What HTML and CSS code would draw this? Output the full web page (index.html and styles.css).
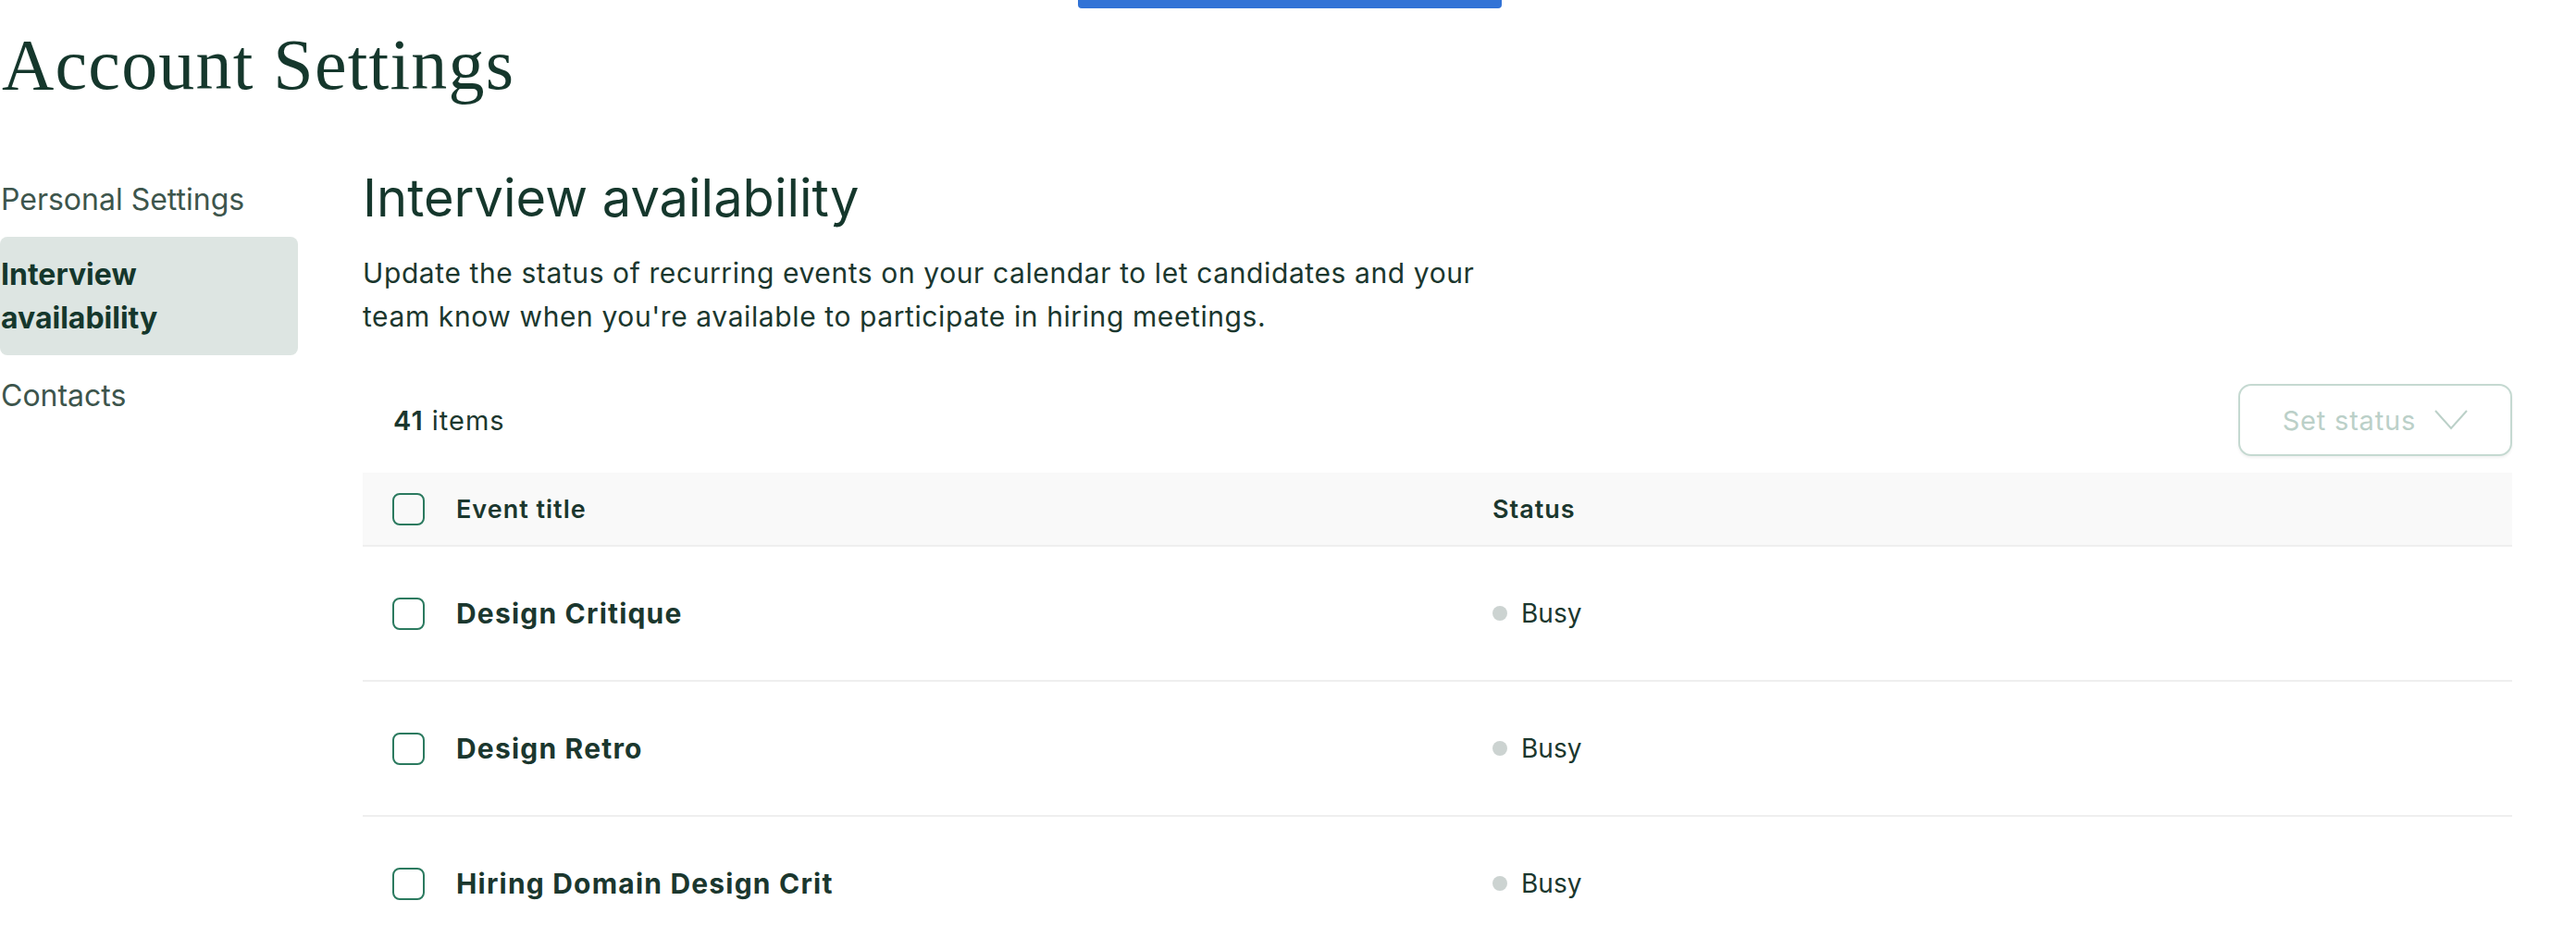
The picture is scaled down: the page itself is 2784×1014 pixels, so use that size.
FILE: index.html
```html
<!DOCTYPE html>
<html lang="en">

<head>
    <meta charset="UTF-8">
    <meta name="viewport" content="width=device-width, initial-scale=1.0">
    <title>Account Settings</title>
    <link rel="stylesheet" href="styles.css">
</head>

<body>
    <div class="banner"></div>
    <h1 class="page-title">Account Settings</h1>
    <div class="layout">
        <ul class="side-nav">
            <li>Personal Settings</li>
            <li class="active">Interview availability</li>
            <li>Contacts</li>
        </ul>
        <main class="panel">
            <h2 class="panel-title">Interview availability</h2>
            <p class="intro">Update the status of recurring events on your calendar to let candidates and your team know when you're available to participate in hiring meetings.</p>
            <div class="toolbar">
                <span class="count"><b>41</b> items</span>
                <button class="status-btn" disabled>Set status
                    <svg width="36" height="22" viewBox="0 0 36 22"><polyline points="1,1 18,20 35,1" fill="none" stroke="currentColor" stroke-width="2"/></svg>
                </button>
            </div>
            <div class="table">
                <div class="row head">
                    <div class="cell first"><span class="check"></span>Event title</div>
                    <div class="cell">Status</div>
                </div>
                <div class="row">
                    <div class="cell first"><span class="check"></span><span class="event">Design Critique</span></div>
                    <div class="cell"><span class="dot"></span>Busy</div>
                </div>
                <div class="row">
                    <div class="cell first"><span class="check"></span><span class="event">Design Retro</span></div>
                    <div class="cell"><span class="dot"></span>Busy</div>
                </div>
                <div class="row">
                    <div class="cell first"><span class="check"></span><span class="event">Hiring Domain Design Crit</span></div>
                    <div class="cell"><span class="dot"></span>Busy</div>
                </div>
            </div>
        </main>
    </div>
</body>

</html>
```

FILE: styles.css
```css
body {
    margin: 0;
    background-color: #fff;
    color: #1b372e;
    font-family: Inter, "Liberation Sans", sans-serif;
}

ul {
    margin: 0;
    padding: 0;
    list-style: none;
}

.banner {
    position: absolute;
    top: 0;
    left: 1165px;
    width: 458px;
    height: 9px;
    border-radius: 0 0 4px 4px;
    background-color: #3273d6;
}

.page-title {
    margin: 0;
    padding: 31px 0 0 2px;
    font-family: "Liberation Serif", "DejaVu Serif", serif;
    font-size: 78px;
    line-height: 78px;
    font-weight: normal;
    letter-spacing: 1.2px;
    color: #15372c;
}

.layout {
    display: flex;
    gap: 70px;
    margin-top: 66px;
}

.side-nav {
    flex: 0 0 322px;
}

.side-nav li {
    padding: 17px 20px 17px 1px;
    font-size: 32px;
    line-height: 47px;
    color: #3d554c;
    border-radius: 8px;
}

.side-nav .active {
    margin-bottom: 3px;
    background-color: #dde5e2;
    font-weight: 700;
    color: #15372c;
}

.panel {
    flex: 0 0 2323px;
}

.panel-title {
    margin: 4px 0 0;
    font-size: 56px;
    line-height: 70px;
    font-weight: 400;
    color: #15372c;
}

.intro {
    margin: 23px 0 0;
    max-width: 1240px;
    font-size: 30px;
    line-height: 47px;
    letter-spacing: 0.6px;
}

.toolbar {
    display: flex;
    justify-content: space-between;
    align-items: center;
    margin-top: 49px;
    padding-left: 33px;
}

.count {
    font-size: 29px;
    letter-spacing: 1px;
}

.count b {
    font-weight: 600;
}

.status-btn {
    display: flex;
    align-items: center;
    gap: 20px;
    height: 78px;
    padding: 0 46px;
    border: 2px solid #c5d9d1;
    border-radius: 14px;
    background-color: #fff;
    box-shadow: 0 2px 3px rgba(0, 0, 0, 0.06);
    font-family: inherit;
    font-size: 29px;
    letter-spacing: 0.8px;
    color: #bbd0c8;
}

.table {
    margin-top: 18px;
}

.row {
    display: grid;
    grid-template-columns: 1189px 1fr;
    height: 144px;
    border-bottom: 2px solid #efefef;
}

.row.head {
    height: 78px;
    background-color: #f9f9f9;
    font-weight: 600;
}

.cell {
    display: flex;
    align-items: center;
    padding-left: 32px;
    font-size: 28px;
}

.head .cell {
    font-size: 27px;
    letter-spacing: 1px;
}

.check {
    flex: 0 0 auto;
    width: 31px;
    height: 31px;
    margin-right: 34px;
    border: 2px solid #2b7a5f;
    border-radius: 8px;
}

.event {
    font-size: 30px;
    font-weight: 700;
    letter-spacing: 1.2px;
}

.dot {
    width: 16px;
    height: 16px;
    margin-right: 15px;
    border-radius: 50%;
    background-color: #ccd3d1;
}
```
